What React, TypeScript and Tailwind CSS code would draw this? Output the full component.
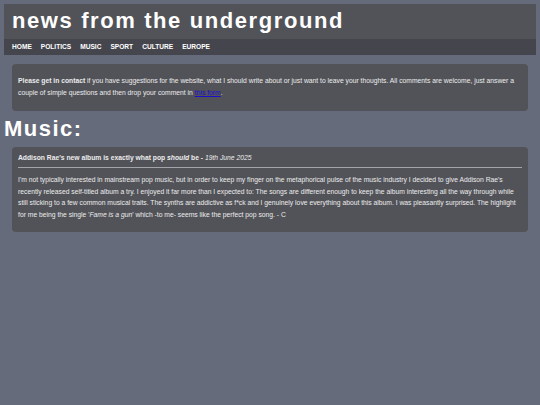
export default function App() {
  const nav = ['HOME', 'POLITICS', 'MUSIC', 'SPORT', 'CULTURE', 'EUROPE'];
  return (
    <div className="min-h-[405px] bg-[#666b7b] p-1 font-['Liberation_Sans',Arial,sans-serif] text-[#ececec]">
      <header className="bg-[#525359]">
        <h1 className="px-2 pt-[4px] pb-[6px] text-[22px] leading-[25px] font-bold tracking-[1.6px] text-white">
          news from the underground
        </h1>
        <nav className="flex gap-[9px] bg-[#45464d] px-2 py-[4px] text-[6.6px] leading-[8px] font-bold text-white">
          {nav.map(n => (
            <a key={n} href="#">{n}</a>
          ))}
        </nav>
      </header>

      <div className="mx-2 mt-[9px] rounded-[4px] bg-[#525359] px-[6px] pt-[11px] pb-[12px] text-[6.75px] leading-[12px]">
        <b>Please get in contact</b> if you have suggestions for the website, what I should write about or just want to leave your thoughts. All comments are welcome, just answer a couple of simple questions and then drop your comment in{' '}
        <a href="#" className="text-[#1a0dcc] underline">this form</a>.
      </div>

      <h2 className="mt-[5px] text-[22px] leading-[26px] font-bold tracking-[1.5px] text-white">Music:</h2>

      <article className="mx-2 mt-[5px] rounded-[4px] bg-[#525359] px-[6px] pt-[5px] pb-[11px] text-[6.75px] leading-[11.7px]">
        <div className="pb-[3px] font-bold leading-[12px]">
          Addison Rae's new album is exactly what pop <i>should</i> be - <span className="font-normal italic">19th June 2025</span>
        </div>
        <hr className="border-t border-[#a4a5ab]" />
        <p className="mt-[6px]">
          I'm not typically interested in mainstream pop music, but in order to keep my finger on the metaphorical pulse of the music industry I decided to give Addison Rae's recently released self-titled album a try. I enjoyed it far more than I expected to: The songs are different enough to keep the album interesting all the way through while still sticking to a few common musical traits. The synths are addictive as f*ck and I genuinely love everything about this album. I was pleasantly surprised. The highlight for me being the single '<i>Fame is a gun</i>' which -to me- seems like the perfect pop song. - C
        </p>
      </article>
    </div>
  );
}
